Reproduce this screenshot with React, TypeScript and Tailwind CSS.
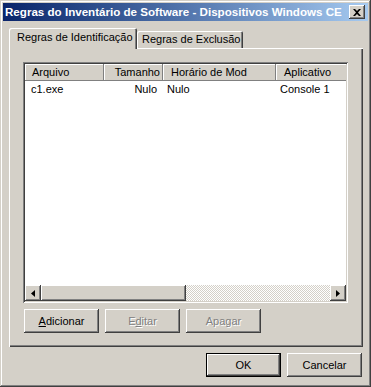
import React from 'react';

const face = "font-['Liberation_Sans',Arial,sans-serif]";
const raised =
  'shadow-[inset_-1px_-1px_#404040,inset_1px_1px_#ffffff,inset_-2px_-2px_#808080,inset_2px_2px_#d4d0c8]';

const Button: React.FC<{ label: React.ReactNode; disabled?: boolean; isDefault?: boolean }> = ({
  label,
  disabled,
  isDefault,
}) => (
  <div
    className={`w-[75px] h-[24px] bg-[#d4d0c8] flex items-center justify-center text-[11px] ${
      isDefault ? 'border border-black' : ''
    } ${raised} ${disabled ? "text-[#808080] [text-shadow:1px_1px_0_#ffffff]" : 'text-black'}`}
  >
    {label}
  </div>
);

const Arrow: React.FC<{ dir: 'left' | 'right' }> = ({ dir }) => (
  <div className={`w-[16px] h-[16px] bg-[#d4d0c8] flex items-center justify-center ${raised}`}>
    <svg width="4" height="7" viewBox="0 0 4 7">
      {dir === 'left' ? <path d="M4 0 L0 3.5 L4 7 Z" fill="#000" /> : <path d="M0 0 L4 3.5 L0 7 Z" fill="#000" />}
    </svg>
  </div>
);

const columns = [
  { title: 'Arquivo', w: 'w-[79px]', align: 'justify-start pl-[7px]' },
  { title: 'Tamanho', w: 'w-[59px]', align: 'justify-end pr-[3px]' },
  { title: 'Horário de Mod', w: 'w-[113px]', align: 'justify-start pl-[8px]' },
  { title: 'Aplicativo', w: 'w-[90px]', align: 'justify-start pl-[8px]' },
];

export default function App() {
  return (
    <div
      className={`w-[371px] h-[387px] bg-[#d4d0c8] p-[3px] overflow-hidden ${face} shadow-[inset_-1px_-1px_#404040,inset_1px_1px_#d4d0c8,inset_-2px_-2px_#808080,inset_2px_2px_#ffffff]`}
    >
      {/* title bar */}
      <div className="h-[18px] bg-linear-to-r from-[#0a246a] to-[#a6caf0] flex items-center justify-between pl-[2px] pr-[3px]">
        <span className="min-w-0 overflow-hidden text-white font-bold text-[11.6px] whitespace-nowrap leading-none">
          Regras do Inventário de Software - Dispositivos Windows CE
        </span>
        <div className={`shrink-0 w-[16px] h-[14px] bg-[#d4d0c8] flex items-center justify-center ${raised}`}>
          <svg width="8" height="7" viewBox="0 0 8 7">
            <path d="M0 0 L2 0 L4 2 L6 0 L8 0 L5 3.5 L8 7 L6 7 L4 5 L2 7 L0 7 L3 3.5 Z" fill="#000" />
          </svg>
        </div>
      </div>

      {/* tabs */}
      <div className="mt-[7px] ml-[6px] flex items-end h-[20px]">
        <div className="relative z-10 w-[128px] h-[21px] -mb-px bg-[#d4d0c8] rounded-t-[2px] shadow-[inset_1px_1px_#ffffff,inset_-1px_0_#404040,inset_-2px_0_#808080] flex items-center pl-[8px] pb-[2px] text-[11px] text-black">
          Regras de Identificação
        </div>
        <div className="w-[106px] h-[17px] bg-[#d4d0c8] rounded-t-[2px] shadow-[inset_1px_1px_#ffffff,inset_-1px_0_#404040,inset_-2px_0_#808080] flex items-center pl-[5px] text-[11px] text-black">
          Regras de Exclusão
        </div>
      </div>

      {/* tab panel */}
      <div className="ml-[6px] w-[354px] h-[299px] bg-[#d4d0c8] pt-[14px] pl-[14px] shadow-[inset_1px_1px_#ffffff,inset_-1px_-1px_#404040,inset_-2px_-2px_#808080]">
        <div className="w-[325px] h-[241px] bg-white p-[2px] shadow-[inset_1px_1px_#808080,inset_-1px_-1px_#ffffff,inset_2px_2px_#404040,inset_-2px_-2px_#d4d0c8] flex flex-col">
          <div className="flex-1 overflow-hidden text-[11px]">
            <div className="flex h-[17px] w-[400px]">
              {columns.map((c) => (
                <div
                  key={c.title}
                  className={`${c.w} h-full bg-[#d4d0c8] flex items-center ${c.align} whitespace-nowrap shadow-[inset_-1px_-1px_#808080,inset_1px_1px_#ffffff]`}
                >
                  {c.title}
                </div>
              ))}
            </div>
            <div className="flex h-[16px] items-center w-[400px] whitespace-nowrap">
              <div className="w-[79px] pl-[6px]">c1.exe</div>
              <div className="w-[59px] text-right pr-[6px]">Nulo</div>
              <div className="w-[113px] pl-[4px]">Nulo</div>
              <div className="w-[90px] pl-[4px]">Console 1</div>
            </div>
          </div>
          {/* horizontal scrollbar */}
          <div className="flex h-[16px]">
            <Arrow dir="left" />
            <div className={`w-[145px] h-full bg-[#d4d0c8] ${raised}`} />
            <div className="flex-1 h-full bg-[repeating-conic-gradient(#d4d0c8_0_25%,#ffffff_0_50%)] bg-[length:2px_2px]" />
            <Arrow dir="right" />
          </div>
        </div>

        <div className="mt-[6px] ml-px flex gap-[6px]">
          <Button label={<><span className="underline">A</span>dicionar</>} />
          <Button label={<>E<span className="underline">d</span>itar</>} disabled />
          <Button label={<>Apa<span className="underline">g</span>ar</>} disabled />
        </div>
      </div>

      {/* dialog buttons */}
      <div className="mt-[6px] flex justify-end gap-[6px] pr-[6px]">
        <Button label="OK" isDefault />
        <Button label="Cancelar" />
      </div>
    </div>
  );
}
